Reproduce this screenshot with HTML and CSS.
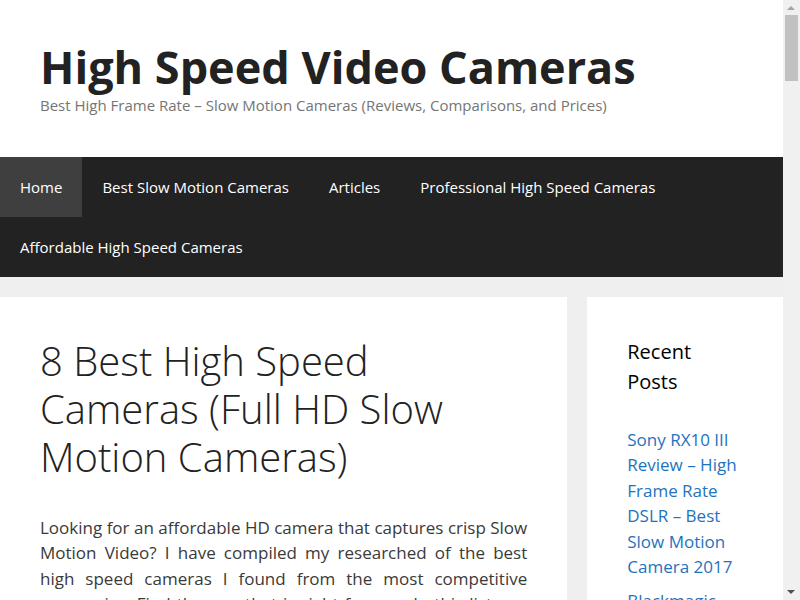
FILE: index.html
```html
<!DOCTYPE html>
<html lang="en">
  <head>
    <meta charset="utf-8">
    <meta name="viewport" content="width=device-width,initial-scale=1.0">
    <title>High Speed Video Cameras</title>
    <link rel="stylesheet" href="styles.css">
  </head>
  <body>
    <div class="page">
      <header class="site-header">
        <div class="site-title">High Speed Video Cameras</div>
        <div class="site-description">Best High Frame Rate &ndash; Slow Motion Cameras (Reviews, Comparisons, and Prices)</div>
      </header>

      <nav class="main-nav">
        <a href="#" class="current">Home</a>
        <a href="#">Best Slow Motion Cameras</a>
        <a href="#">Articles</a>
        <a href="#">Professional High Speed Cameras</a>
        <a href="#">Affordable High Speed Cameras</a>
      </nav>

      <div class="site-content">
        <main class="content-area">
          <article class="inside-article">
            <h1 class="entry-title">8 Best High Speed Cameras (Full HD Slow Motion Cameras)</h1>
            <div class="entry-content">
              <p>Looking for an affordable HD camera that captures crisp Slow Motion Video? I have compiled my researched of the best high speed cameras I found from the most competitive companies. Find the one that is right for you. In this list you will find cameras for every budget, from compact point and shoot models to professional cinema cameras.</p>
              <p>High frame rate recording used to be something only found in expensive laboratory equipment. Today many consumer cameras can shoot at 120, 240 or even 960 frames per second, which makes slow motion video available to almost everyone.</p>
              <p>Below you will find the cameras ranked by image quality, frame rate, resolution at high speed and overall value for money.</p>
            </div>
          </article>
        </main>

        <aside class="sidebar">
          <div class="widget">
            <h2 class="widget-title">Recent Posts</h2>
            <ul>
              <li><a href="#">Sony RX10 III Review &ndash; High Frame Rate DSLR &ndash; Best Slow Motion Camera 2017</a></li>
              <li><a href="#">Blackmagic Design URSA Mini 4.6K Review</a></li>
              <li><a href="#">Panasonic Lumix GH5 Slow Motion Review</a></li>
              <li><a href="#">Sony FS700 Review</a></li>
              <li><a href="#">Chronos 1.4 High Speed Camera Review</a></li>
            </ul>
          </div>
        </aside>
      </div>
    </div>

    <!-- browser scrollbar as it shows in the screenshot -->
    <div class="scrollbar" aria-hidden="true">
      <div class="scroll-up"></div>
      <div class="scroll-thumb"></div>
      <div class="scroll-down"></div>
    </div>
  </body>
</html>
```

FILE: styles.css
```css
body {
  margin: 0;
  background-color: #efefef;
  font-family: "Open Sans", sans-serif;
  font-size: 17px;
  line-height: 1.5;
  color: #3a3a3a;
}
a {
  color: #1e73be;
  text-decoration: none;
}
.page {
  width: 783px;
}
.site-header {
  background-color: #ffffff;
  padding: 40px;
}
.site-title {
  font-size: 45px;
  font-weight: 700;
  line-height: 1.2;
  color: #222222;
}
.site-description {
  font-size: 15px;
  line-height: 1.5;
  color: #757575;
}
.main-nav {
  background-color: #222222;
  display: flex;
  flex-wrap: wrap;
}
.main-nav a {
  color: #ffffff;
  font-size: 15px;
  line-height: 60px;
  padding: 0 20px;
}
.main-nav a.current {
  background-color: #3f3f3f;
}
.site-content {
  display: flex;
  align-items: flex-start;
  padding-top: 20px;
}
.content-area {
  width: 75%;
  padding-right: 20px;
  box-sizing: border-box;
}
.inside-article {
  background-color: #ffffff;
  padding: 40px;
}
.entry-title {
  margin: 0;
  font-size: 40px;
  font-weight: 300;
  line-height: 1.2;
  color: #222222;
}
.entry-content {
  margin-top: 34px;
}
.entry-content p {
  margin: 0 0 1.5em;
  text-align: justify;
}
.sidebar {
  width: 25%;
}
.widget {
  background-color: #ffffff;
  padding: 40px;
  min-height: 1400px;
}
.widget-title {
  margin: 0 0 30px;
  font-size: 20px;
  font-weight: 400;
  line-height: 1.5;
  color: #000000;
}
.widget ul {
  list-style: none;
  margin: 0;
  padding: 0;
}
.widget li {
  margin-bottom: 8px;
}

.scrollbar {
  position: fixed;
  top: 0;
  right: 0;
  width: 17px;
  height: 100%;
  background-color: #f0f0f0;
}
.scroll-up,
.scroll-down {
  position: absolute;
  left: 4px;
  width: 0;
  height: 0;
  border-left: 4px solid transparent;
  border-right: 4px solid transparent;
}
.scroll-up {
  top: 6px;
  border-bottom: 4px solid #a3a3a3;
}
.scroll-down {
  bottom: 6px;
  border-top: 4px solid #505050;
}
.scroll-thumb {
  position: absolute;
  top: 15px;
  left: 2px;
  width: 13px;
  height: 66px;
  background-color: #c1c1c1;
}
```
